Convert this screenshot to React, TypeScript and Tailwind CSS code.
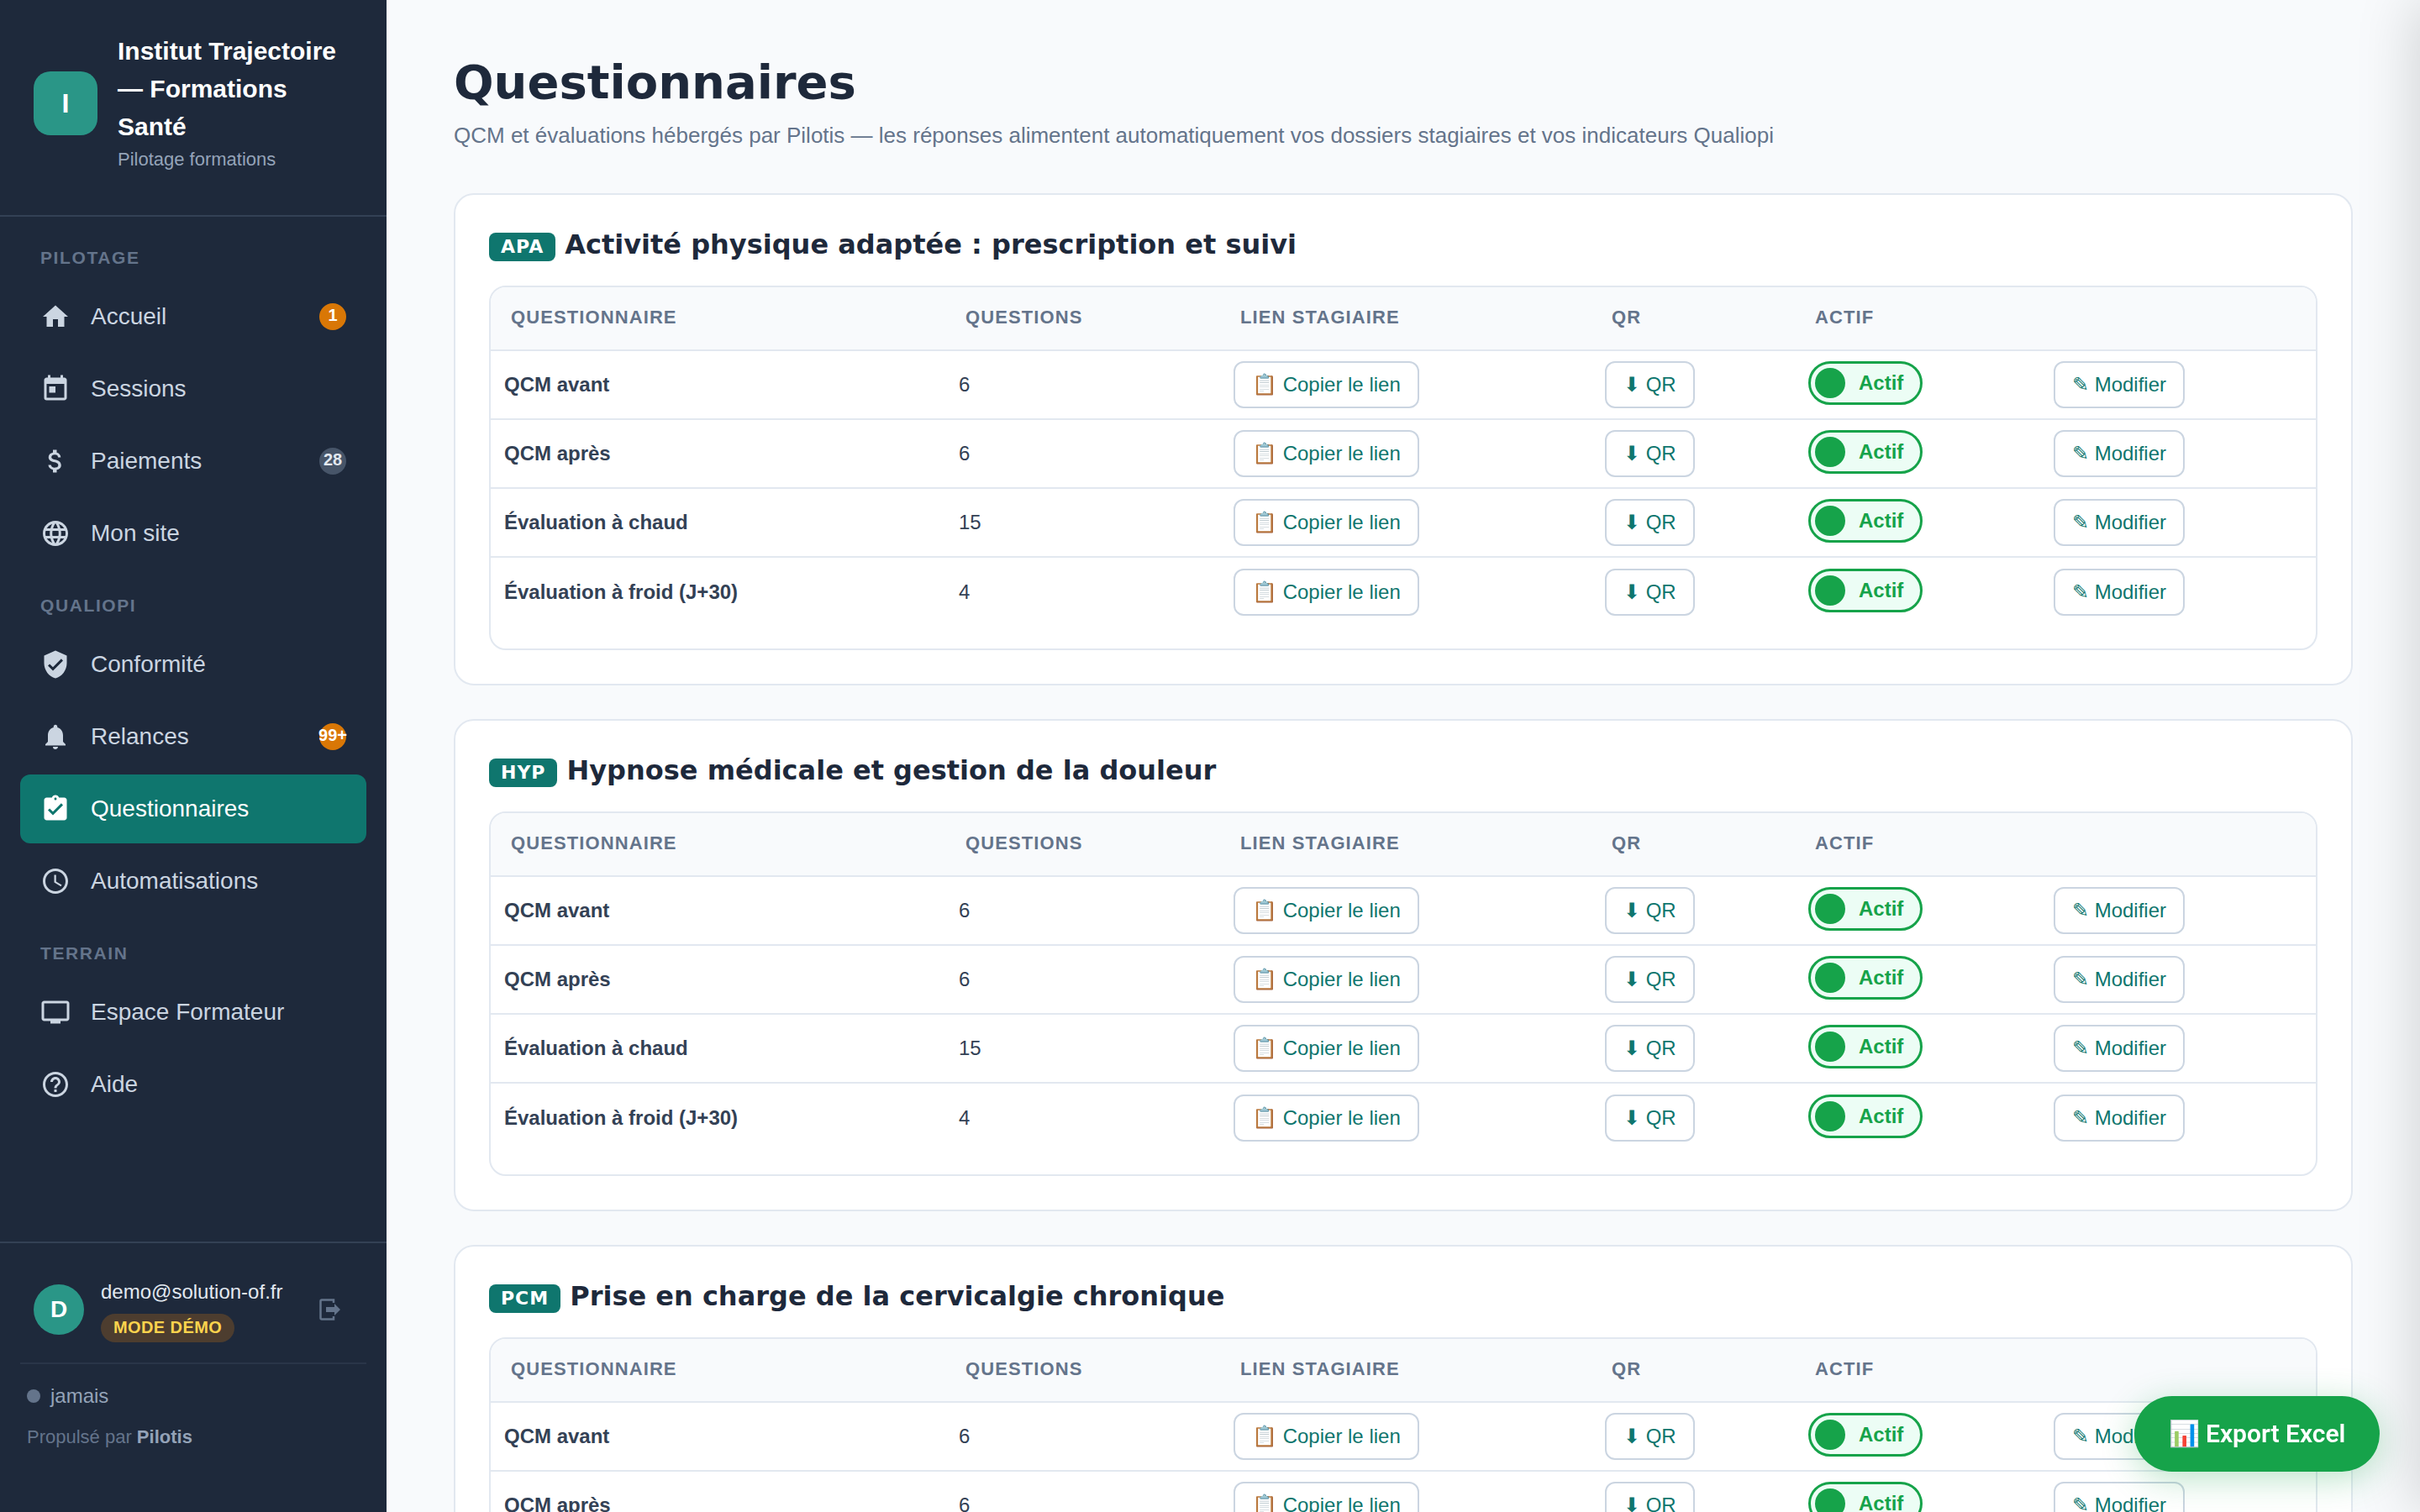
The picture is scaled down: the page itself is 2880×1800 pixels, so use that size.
import {
  MdAccessTime,
  MdAssignmentTurnedIn,
  MdAttachMoney,
  MdHelpOutline,
  MdHome,
  MdLanguage,
  MdNotifications,
  MdToday,
  MdTv,
  MdVerifiedUser,
} from 'react-icons/md'
import type { IconType } from 'react-icons'

interface NavItem {
  label: string
  icon: IconType
  badge?: string
  badgeTone?: 'amber' | 'slate'
  active?: boolean
}

const navSections: { title: string; items: NavItem[] }[] = [
  {
    title: 'PILOTAGE',
    items: [
      { label: 'Accueil', icon: MdHome, badge: '1', badgeTone: 'amber' },
      { label: 'Sessions', icon: MdToday },
      { label: 'Paiements', icon: MdAttachMoney, badge: '28', badgeTone: 'slate' },
      { label: 'Mon site', icon: MdLanguage },
    ],
  },
  {
    title: 'QUALIOPI',
    items: [
      { label: 'Conformité', icon: MdVerifiedUser },
      { label: 'Relances', icon: MdNotifications, badge: '99+', badgeTone: 'amber' },
      { label: 'Questionnaires', icon: MdAssignmentTurnedIn, active: true },
      { label: 'Automatisations', icon: MdAccessTime },
    ],
  },
  {
    title: 'TERRAIN',
    items: [
      { label: 'Espace Formateur', icon: MdTv },
      { label: 'Aide', icon: MdHelpOutline },
    ],
  },
]

const rows = [
  { name: 'QCM avant', count: 6 },
  { name: 'QCM après', count: 6 },
  { name: 'Évaluation à chaud', count: 15 },
  { name: 'Évaluation à froid (J+30)', count: 4 },
]

const formations = [
  { code: 'APA', title: 'Activité physique adaptée : prescription et suivi' },
  { code: 'HYP', title: 'Hypnose médicale et gestion de la douleur' },
  { code: 'PCM', title: 'Prise en charge de la cervicalgie chronique' },
]

const Sidebar = () => (
  <aside className="flex h-screen w-[460px] shrink-0 flex-col bg-[#1e293b]">
    <div className="flex items-center gap-6 border-b-2 border-[#334155] pt-[38px] pb-[49px] pl-10">
      <div className="flex h-[76px] w-[76px] shrink-0 items-center justify-center rounded-[20px] bg-[#2a9687] text-[32px] font-bold text-white">
        I
      </div>
      <div>
        <div className="w-[290px] text-[30px] leading-[45px] font-bold text-white">
          Institut Trajectoire — Formations Santé
        </div>
        <div className="text-[22px] leading-[34px] text-[#94a3b8]">Pilotage formations</div>
      </div>
    </div>

    <nav className="flex-1 px-6 pt-[36px]">
      {navSections.map((section, i) => (
        <div key={section.title} className={i > 0 ? 'mt-[32px]' : ''}>
          <div className="mb-[16px] pl-6 text-[21px] leading-[26px] font-bold tracking-[1.6px] text-[#64748b]">
            {section.title}
          </div>
          <div className="flex flex-col gap-1">
            {section.items.map((item) => (
              <div
                key={item.label}
                className={`flex h-[82px] items-center gap-6 rounded-[12px] pr-6 pl-6 text-[28px] ${
                  item.active ? 'bg-[#0f766e] text-white' : 'text-[#cbd5e1]'
                }`}
              >
                <item.icon className="h-9 w-9 shrink-0" />
                <span className="flex-1 pb-[1px]">{item.label}</span>
                {item.badge && (
                  <span
                    className={`flex h-8 w-8 shrink-0 items-center justify-center rounded-full pb-[5px] text-[20px] font-bold whitespace-nowrap ${
                      item.badgeTone === 'amber'
                        ? 'bg-[#d97706] text-white'
                        : 'bg-[#475569] text-[#e2e8f0]'
                    }`}
                  >
                    {item.badge}
                  </span>
                )}
              </div>
            ))}
          </div>
        </div>
      ))}
    </nav>

    <div className="border-t-2 border-[#334155] px-6 pb-[76px]">
      <div className="flex items-center gap-5 pt-[40px] pb-[24px] pl-4">
        <div className="flex h-[60px] w-[60px] shrink-0 items-center justify-center rounded-full bg-[#2a9687] text-[28px] font-bold text-white">
          D
        </div>
        <div className="flex-1">
          <div className="text-[24px] leading-[36px] text-[#e2e8f0]">demo@solution-of.fr</div>
          <span className="mt-[8px] block w-fit rounded-full bg-[#4d3d2f] px-[15px] pb-[2px] text-[20px] leading-[32px] font-bold tracking-[0.4px] text-[#fcd34d]">
            MODE DÉMO
          </span>
        </div>
        <svg width="26" height="28" viewBox="0 0 26 28" fill="none" className="mr-[30px] text-[#64748b]">
          <path d="M17 6V2.500H3a1.500 1.500 0 0 0-1.500 1.500v20A1.500 1.500 0 0 0 3 25.500h14V22" stroke="currentColor" strokeWidth="2.500" />
          <path d="M8 11h10V7l7 7-7 7v-4H8z" fill="currentColor" />
        </svg>
      </div>
      <div className="border-t-2 border-[#293548] pt-[25px] pl-2">
        <div className="flex items-center gap-3 text-[24px] leading-[26px] text-[#94a3b8]">
          <span className="h-4 w-4 rounded-full bg-[#64748b]" />
          jamais
        </div>
        <div className="mt-[23px] text-[22px] leading-[26px] text-[#64748b]">
          Propulsé par <b className="text-[#94a3b8]">Pilotis</b>
        </div>
      </div>
    </div>
  </aside>
)

const outlineBtn =
  'inline-flex h-14 items-center rounded-[12px] border-2 border-[#cbd5e1] bg-white px-5 text-[24px] text-[#0f766e] whitespace-nowrap'

const FormationCard = ({ code, title }: { code: string; title: string }) => (
  <section className="mb-[40px] rounded-[24px] border-2 border-[#e2e8f0] bg-white p-10">
    <h2 className="mb-[24px] flex h-[44px] items-center gap-[11px] font-['DejaVu_Sans',sans-serif] text-[32px] font-bold text-[#1e293b]">
      <span className="rounded-[8px] bg-[#0f766e] px-[14px] text-[22px] leading-[34px] tracking-[1px] text-white">
        {code}
      </span>
      <span className="pb-[6px]">{title}</span>
    </h2>
    <div className="overflow-hidden rounded-[20px] border-2 border-[#e2e8f0] pb-[27px]">
      <table className="w-full table-fixed border-collapse">
        <colgroup>
          <col className="w-[541px]" />
          <col className="w-[327px]" />
          <col className="w-[442px]" />
          <col className="w-[242px]" />
          <col className="w-[292px]" />
          <col />
        </colgroup>
        <thead>
          <tr className="h-[75px] border-b-2 border-[#e2e8f0] bg-[#f8fafc] text-left text-[22px] tracking-[1.1px] text-[#64748b]">
            <th className="pb-1 pl-6 font-bold">QUESTIONNAIRE</th>
            <th className="pb-1 pl-6 font-bold">QUESTIONS</th>
            <th className="pb-1 pl-6 font-bold">LIEN STAGIAIRE</th>
            <th className="pb-1 pl-6 font-bold">QR</th>
            <th className="pb-1 pl-6 font-bold">ACTIF</th>
            <th />
          </tr>
        </thead>
        <tbody>
          {rows.map((row, i) => (
            <tr key={row.name} className={`h-[82px] ${i < rows.length - 1 ? 'border-b-2 border-[#e2e8f0]' : ''}`}>
              <td className="pl-4 text-[24px] font-bold text-[#334155]">{row.name}</td>
              <td className="pl-4 text-[24px] text-[#334155]">{row.count}</td>
              <td className="pl-4">
                <span className={outlineBtn}>📋 Copier le lien</span>
              </td>
              <td className="pl-4">
                <span className={outlineBtn}>⬇ QR</span>
              </td>
              <td className="pl-4">
                <span className="mb-1 inline-flex h-[52px] w-[136px] items-center gap-4 rounded-full border-[3px] border-[#16a34a] bg-[#ecfdf5] pl-[5px] align-middle text-[24px] font-bold text-[#16a34a]">
                  <span className="h-9 w-9 rounded-full bg-[#16a34a]" />
                  Actif
                </span>
              </td>
              <td className="pl-4">
                <span className={outlineBtn}>✎ Modifier</span>
              </td>
            </tr>
          ))}
        </tbody>
      </table>
    </div>
  </section>
)

const App = () => {
  return (
    <div className="flex h-screen overflow-hidden font-['Liberation_Sans',sans-serif]">
      <Sidebar />
      <main className="flex-1 overflow-hidden bg-[#f8fafc] pt-[65px] pr-[80px] pl-[80px]">
        <h1 className="font-['DejaVu_Sans',sans-serif] text-[56px] leading-[66px] font-bold text-[#1e293b]">
          Questionnaires
        </h1>
        <p className="mt-[14px] mb-[53px] text-[26px] leading-[32px] text-[#64748b]">
          QCM et évaluations hébergés par Pilotis — les réponses alimentent automatiquement vos dossiers stagiaires et vos indicateurs Qualiopi
        </p>
        {formations.map((f) => (
          <FormationCard key={f.code} code={f.code} title={f.title} />
        ))}
      </main>

      {/* closed drawer sitting just off the right edge, only its shadow shows */}
      <div className="fixed top-0 left-full h-screen w-[400px] shadow-[-8px_0_64px_rgba(0,0,0,0.15)]" />

      <button className="fixed right-[48px] bottom-[48px] h-[90px] w-[292px] rounded-full bg-[#16a34a] pb-[2px] font-['Roboto',sans-serif] text-[30px] font-semibold text-white shadow-[0_8px_40px_rgba(22,163,74,0.3)]">
        📊 Export Excel
      </button>
    </div>
  )
}

export default App
